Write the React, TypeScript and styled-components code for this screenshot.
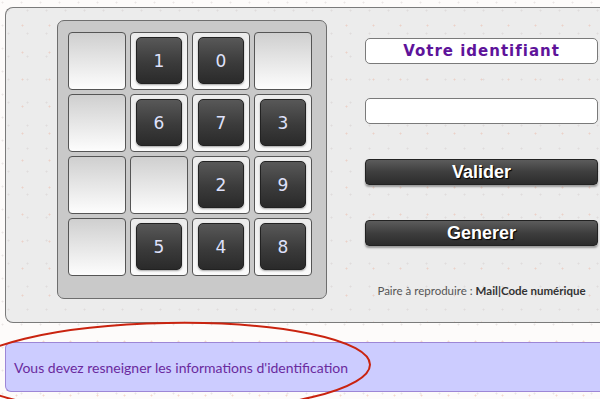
import styled, { createGlobalStyle } from "styled-components";

const GlobalStyle = createGlobalStyle`
  html, body {
    margin: 0;
    padding: 0;
    background: #fdfbfa;
  }
  * { box-sizing: border-box; }
`;

const keys: (string | null)[] = [
  null, "1", "0", null,
  null, "6", "7", "3",
  null, null, "2", "9",
  null, "5", "4", "8",
];

const App = () => {
  return (
    <Page>
      <GlobalStyle />
      <Panel>
        <KeypadFrame>
          {keys.map((k, i) => (
            <Cell key={i} $filled={!!k}>
              {k && <Key>{k}</Key>}
            </Cell>
          ))}
        </KeypadFrame>
        <Form>
          <Label>Votre identifiant</Label>
          <Input type="text" />
          <DarkButton>Valider</DarkButton>
          <DarkButton>Generer</DarkButton>
          <Hint>
            Paire à reproduire : <b>Mail|Code numérique</b>
          </Hint>
        </Form>
      </Panel>
      <Message>Vous devez resneigner les informations d'identification</Message>
      <Circle width="600" height="120" viewBox="0 0 600 120">
        <ellipse
          cx="168"
          cy="58"
          rx="202"
          ry="45"
          fill="none"
          stroke="#c9230f"
          strokeWidth="2"
          transform="rotate(-1 168 58)"
        />
      </Circle>
    </Page>
  );
};

export default App;

const dots = `
  radial-gradient(circle, rgba(235, 175, 155, 0.45) 0.7px, transparent 1.3px),
  radial-gradient(circle, rgba(200, 190, 190, 0.35) 0.7px, transparent 1.3px)
`;

const Page = styled.div`
  position: relative;
  width: 600px;
  height: 399px;
  overflow: hidden;
  padding: 7px 0 0 5px;
  background-color: #fdfbfa;
  background-image: ${dots};
  background-size: 27px 27px, 19px 23px;
  background-position: 3px 4px, 12px 14px;
`;

const Panel = styled.div`
  display: flex;
  align-items: flex-start;
  width: 640px;
  height: 316px;
  padding: 12px 0 0 51px;
  border: 1px solid #7a7a7a;
  border-right: none;
  border-radius: 8px 0 0 8px;
  background-color: #ececec;
  background-image: ${dots};
  background-size: 27px 27px, 19px 23px;
  background-position: 3px 4px, 12px 14px;
`;

const KeypadFrame = styled.div`
  display: grid;
  grid-template-columns: repeat(4, 58px);
  grid-auto-rows: 58px;
  gap: 4px;
  width: 270px;
  height: 279px;
  padding: 11px 13px 21px 10px;
  border: 1px solid #6e6e6e;
  border-radius: 7px;
  background: #c9c9c9;
`;

const Cell = styled.div<{ $filled: boolean }>`
  display: flex;
  align-items: flex-start;
  justify-content: flex-start;
  padding: 4px 0 0 5px;
  border: 1px solid #555;
  border-radius: 4px;
  background: ${(p) =>
    p.$filled
      ? "linear-gradient(#ececec, #fbfbfb)"
      : "linear-gradient(#cfcfcf 0%, #e4e4e4 45%, #fdfdfd 100%)"};
`;

const Key = styled.div`
  display: flex;
  align-items: center;
  justify-content: center;
  width: 46px;
  height: 47px;
  border: 1px solid #222;
  border-radius: 5px;
  background: linear-gradient(#585858, #3b3b3b 55%, #2a2a2a);
  box-shadow: 0 1px 2px rgba(0, 0, 0, 0.35);
  color: #dfe1fb;
  font-family: "DejaVu Sans", Verdana, sans-serif;
  font-size: 17px;
`;

const Form = styled.div`
  display: flex;
  flex-direction: column;
  width: 233px;
  margin-left: 38px;
  padding-top: 18px;
`;

const Label = styled.div`
  height: 26px;
  border: 1px solid #7a7a7a;
  border-radius: 5px;
  background: #fff;
  color: #5e139a;
  font-family: "DejaVu Sans", Verdana, sans-serif;
  font-weight: bold;
  font-size: 15px;
  letter-spacing: 1px;
  line-height: 24px;
  text-align: center;
`;

const Input = styled.input`
  height: 26px;
  margin-top: 34px;
  border: 1px solid #7a7a7a;
  border-radius: 5px;
  background: #fff;
  outline: none;
`;

const DarkButton = styled.button`
  height: 26px;
  margin-top: 35px;
  padding: 0;
  border: 1px solid #222;
  border-radius: 4px;
  background: linear-gradient(#5c5c5c, #3e3e3e 50%, #2c2c2c);
  box-shadow: 0 2px 2px rgba(0, 0, 0, 0.35);
  color: #fff;
  font-family: "Liberation Sans", Arial, sans-serif;
  font-weight: bold;
  font-size: 18px;
  line-height: 24px;
  text-shadow: 1px 1px 1px #000;
`;

const Hint = styled.div`
  margin-top: 38px;
  color: #555;
  font-family: Lato, "Open Sans", sans-serif;
  font-size: 11.5px;
  text-align: center;

  b {
    color: #333;
  }
`;

const Message = styled.div`
  display: flex;
  align-items: center;
  width: 640px;
  height: 50px;
  margin-top: 19px;
  padding-left: 8px;
  border: 1px solid #9d86d6;
  border-right: none;
  border-radius: 6px 0 0 6px;
  background: #ccccff;
  color: #6a2a9e;
  font-family: Lato, "Open Sans", sans-serif;
  font-size: 14px;
`;

const Circle = styled.svg`
  position: absolute;
  left: 0;
  top: 310px;
  pointer-events: none;
`;
